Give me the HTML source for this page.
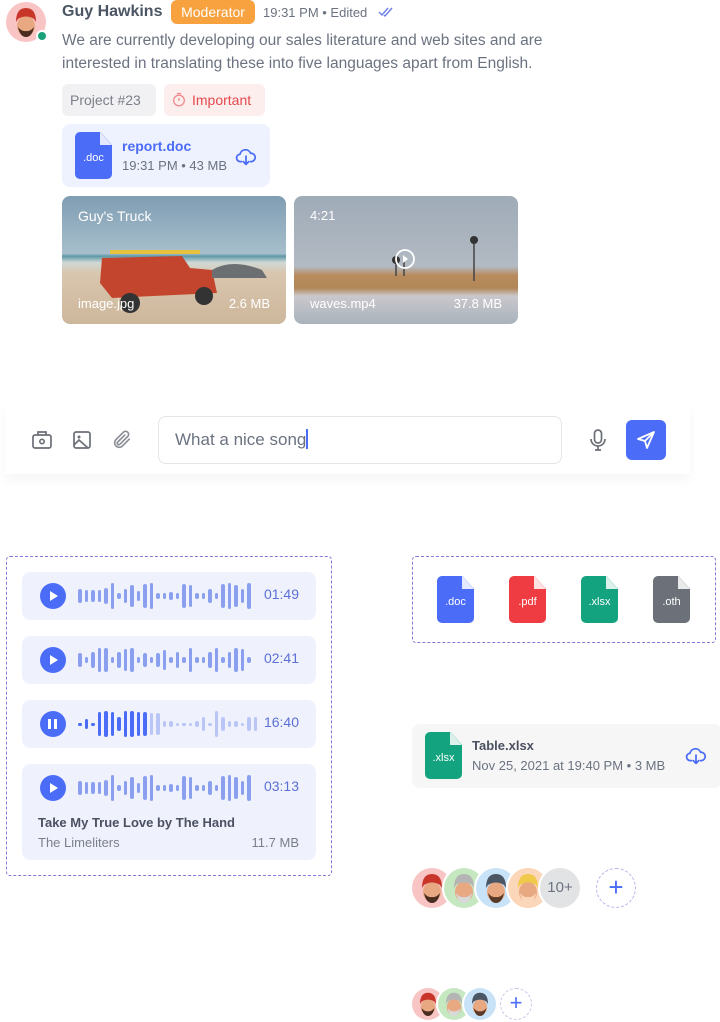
<!DOCTYPE html>
<html><head><meta charset="utf-8">
<style>
*{margin:0;padding:0;box-sizing:border-box}
body{width:720px;height:1022px;background:#fff;font-family:"Liberation Sans",sans-serif;position:relative;overflow:hidden;color:#6b7280}
.a{position:absolute}
.av{position:absolute;border-radius:50%;overflow:hidden}
.chip{position:absolute;height:32px;border-radius:6px;font-size:14px;line-height:32px;padding:0 8px}
.card{position:absolute;border-radius:8px}
.fi{position:absolute;width:37px;height:47px;border-radius:5px;color:#fff;font-size:11px;text-align:center;line-height:52px;clip-path:polygon(0 0,68% 0,100% 27%,100% 100%,0 100%)}
.fi:after{content:"";position:absolute;right:0;top:0;width:12px;height:13px;background:rgba(255,255,255,.85);clip-path:polygon(0 0,100% 100%,0 100%)}
.row{position:absolute;left:22px;width:294px;background:#eff2fd;border-radius:8px}
.play{position:absolute;left:18px;top:11px;width:26px;height:26px;border-radius:50%;background:#4a6cf7}
.play:after{content:"";position:absolute;left:10px;top:8px;border-left:8px solid #fff;border-top:5px solid transparent;border-bottom:5px solid transparent}
.pause:after{content:"";position:absolute;left:8px;top:8px;width:3px;height:10px;background:#fff;box-shadow:6px 0 0 #fff;border:0}
.wave{position:absolute;left:56px;top:10px;height:28px;display:flex;align-items:center;gap:3px}
.wave i{display:block;width:3.5px;border-radius:2px;background:#8aa0ee}
.tm{position:absolute;right:17px;top:14px;font-size:14px;color:#5b6fd6}
</style></head><body>

<div class="av" style="left:6px;top:2px;width:40px;height:40px;background:#f9c4c4">
<svg width="40" height="40" viewBox="0 0 40 40"><ellipse cx="20" cy="24" rx="9" ry="10" fill="#e8a882"/><path d="M10 20 Q10 6 20 6 Q30 6 30 20 L28 17 Q20 12 12 17Z" fill="#c8362a"/><path d="M12 25 Q14 35 20 35 Q26 35 28 25 Q24 30 20 29 Q16 30 12 25Z" fill="#4a2c20"/></svg></div>
<div class="a" style="left:36px;top:30px;width:12px;height:12px;border-radius:50%;background:#1aa179;border:2px solid #fff"></div>

<div class="a" style="left:62px;top:3px;font-size:16px;font-weight:bold;color:#4b5563">Guy Hawkins</div>
<div class="a" style="left:171px;top:0;width:84px;height:24px;border-radius:6px;background:#f7a23e;color:#fff;font-size:14px;line-height:24px;text-align:center">Moderator</div>
<div class="a" style="left:263px;top:5px;font-size:13px;color:#6b7280">19:31 PM • Edited</div>
<svg class="a" style="left:378px;top:6px" width="16" height="12" viewBox="0 0 16 12"><path d="M1 6l3 3 6-7M6 9l1 1 7-8" stroke="#6a7fe6" stroke-width="1.4" fill="none"/></svg>
<div class="a" style="left:62px;top:29px;font-size:15.5px;line-height:23px;color:#6b7280;width:525px">We are currently developing our sales literature and web sites and are interested in translating these into five languages apart from English.</div>

<div class="chip" style="left:62px;top:84px;width:94px;background:#f1f1f3;color:#7a7f89">Project #23</div>
<div class="chip" style="left:164px;top:84px;width:101px;background:#fdeeee;color:#e5484d;padding-left:28px">Important</div>
<svg class="a" style="left:172px;top:92px" width="14" height="15" viewBox="0 0 14 15"><circle cx="7" cy="8.5" r="5.3" stroke="#f08a8d" stroke-width="1.3" fill="none"/><path d="M7 6v3M5 1.5h4" stroke="#f08a8d" stroke-width="1.3"/></svg>

<div class="card" style="left:62px;top:124px;width:208px;height:63px;background:#eef2fe"></div>
<div class="fi" style="left:75px;top:132px;background:#4a6cf7">.doc</div>
<div class="a" style="left:122px;top:138px;font-size:14px;font-weight:bold;color:#4a6cf7">report.doc</div>
<div class="a" style="left:122px;top:158px;font-size:13px;color:#6b7280">19:31 PM • 43 MB</div>
<svg class="a" style="left:235px;top:146px" width="22" height="22" viewBox="0 0 24 24"><path d="M7 17H6a4 4 0 0 1-.5-8A6 6 0 0 1 17 8a4.5 4.5 0 0 1 1 9h-1M12 11v9M9 17l3 3 3-3" stroke="#4a6cf7" stroke-width="1.9" fill="none" stroke-linecap="round" stroke-linejoin="round"/></svg>

<div class="card" style="left:62px;top:196px;width:224px;height:128px;overflow:hidden;background:linear-gradient(#7f9db3 0%,#a7bfcc 45%,#5e98a8 47%,#cfd9d6 52%,#d9c6ae 60%,#cdb79c 100%)">
<svg class="a" style="left:0;top:0" width="224" height="128"><path d="M40 62 L120 60 L128 72 L150 74 L155 97 L50 102 L38 87Z" fill="#c4452e"/><path d="M48 58 h90 v-4 h-90z" fill="#e6c23e"/><circle cx="68" cy="107" r="10" fill="#333"/><circle cx="142" cy="100" r="9" fill="#333"/><path d="M150 74 Q170 62 200 74 L205 82 L150 82Z" fill="#6b6f72"/></svg>
<div class="a" style="left:16px;top:12px;color:#fff;font-size:14px">Guy's Truck</div>
<div class="a" style="left:16px;top:100px;color:#fff;font-size:13px">image.jpg</div>
<div class="a" style="right:16px;top:100px;color:#fff;font-size:13px">2.6 MB</div>
</div>
<div class="card" style="left:294px;top:196px;width:224px;height:128px;overflow:hidden;background:linear-gradient(#9fabb8 0%,#b2bac3 55%,#b98b5c 62%,#b18758 72%,#cac8cc 78%,#a9b2bc 100%)">
<svg class="a" style="left:0;top:0" width="224" height="128"><path d="M180 85V45M110 80V60M102 80V65" stroke="#444" stroke-width="1.5"/><circle cx="180" cy="44" r="4" fill="#333"/><circle cx="102" cy="64" r="4" fill="#333"/><circle cx="111" cy="63" r="9" fill="none" stroke="#fff" stroke-width="1.8"/><path d="M109 59v8l5-4z" fill="#fff"/></svg>
<div class="a" style="left:16px;top:12px;color:#fff;font-size:13px">4:21</div>
<div class="a" style="left:16px;top:100px;color:#fff;font-size:13px">waves.mp4</div>
<div class="a" style="right:16px;top:100px;color:#fff;font-size:13px">37.8 MB</div>
</div>

<div class="a" style="left:5px;top:404px;width:685px;height:70px;background:#fff;box-shadow:0 6px 10px rgba(0,0,0,.04)"></div>
<svg class="a" style="left:31px;top:430px" width="22" height="20" viewBox="0 0 22 20"><rect x="2" y="5" width="18" height="13" rx="2" stroke="#6b6f76" stroke-width="1.7" fill="none"/><path d="M7 5V2h8v3" stroke="#6b6f76" stroke-width="1.7" fill="none"/><circle cx="11" cy="11.5" r="2.2" stroke="#6b6f76" stroke-width="1.6" fill="none"/></svg>
<svg class="a" style="left:72px;top:430px" width="20" height="20" viewBox="0 0 20 20"><rect x="2" y="2" width="16" height="16" rx="2" stroke="#6b6f76" stroke-width="1.7" fill="none"/><circle cx="7" cy="7" r="1.5" fill="#6b6f76"/><path d="M2 15l5-5 9 8" stroke="#6b6f76" stroke-width="1.7" fill="none"/></svg>
<svg class="a" style="left:111px;top:429px" width="22" height="22" viewBox="0 0 24 24"><path d="M20 11l-8 8a5 5 0 0 1-7-7l8.5-8.5a3.3 3.3 0 0 1 4.7 4.7L9.7 16.7a1.7 1.7 0 0 1-2.4-2.4L15 6.6" stroke="#8a8e95" stroke-width="1.8" fill="none" stroke-linecap="round"/></svg>
<div class="a" style="left:158px;top:416px;width:404px;height:48px;border:1px solid #e3e5e8;border-radius:8px;padding-left:16px;font-size:17px;line-height:46px;color:#6b7280">What a nice song<span style="display:inline-block;width:2px;height:20px;background:#4a6cf7;vertical-align:-4px"></span></div>
<svg class="a" style="left:589px;top:429px" width="18" height="23" viewBox="0 0 18 23"><rect x="5.5" y="1" width="7" height="13" rx="3.5" stroke="#6b6f76" stroke-width="1.7" fill="none"/><path d="M2 10a7 7 0 0 0 14 0M9 17v4M6 21h6" stroke="#6b6f76" stroke-width="1.7" fill="none"/></svg>
<div class="a" style="left:626px;top:420px;width:40px;height:40px;border-radius:6px;background:#4a6cf7"></div>
<svg class="a" style="left:636px;top:430px" width="20" height="20" viewBox="0 0 20 20"><path d="M18 2L2 9l7 2 2 7z M9 11l9-9" stroke="#fff" stroke-width="1.8" fill="none" stroke-linejoin="round"/></svg>

<div class="a" style="left:6px;top:556px;width:326px;height:320px;border:1.3px dashed #8676d6;border-radius:4px"></div>
<div class="row" style="top:572px;height:48px"><div class="play"></div><div class="wave" id="w1"></div><div class="tm">01:49</div></div>
<div class="row" style="top:636px;height:48px"><div class="play"></div><div class="wave" id="w2"></div><div class="tm">02:41</div></div>
<div class="row" style="top:700px;height:48px"><div class="play pause"></div><div class="wave" id="w3"></div><div class="tm">16:40</div></div>
<div class="row" style="top:764px;height:96px"><div class="play"></div><div class="wave" id="w4"></div><div class="tm">03:13</div>
<div class="a" style="left:16px;top:51px;font-size:13px;font-weight:bold;color:#4b5060">Take My True Love by The Hand</div>
<div class="a" style="left:16px;top:71px;font-size:13px;color:#7a7f89">The Limeliters</div>
<div class="a" style="right:17px;top:71px;font-size:13px;color:#7a7f89">11.7 MB</div></div>

<div class="a" style="left:412px;top:556px;width:304px;height:87px;border:1.3px dashed #8676d6;border-radius:4px"></div>
<div class="fi" style="left:437px;top:576px;background:#4a6cf7">.doc</div>
<div class="fi" style="left:509px;top:576px;background:#ef3c42">.pdf</div>
<div class="fi" style="left:581px;top:576px;background:#14a37f">.xlsx</div>
<div class="fi" style="left:653px;top:576px;background:#6b7079">.oth</div>

<div class="card" style="left:412px;top:724px;width:310px;height:64px;background:#f6f6f7"></div>
<div class="fi" style="left:425px;top:732px;background:#14a37f">.xlsx</div>
<div class="a" style="left:472px;top:738px;font-size:13px;font-weight:bold;color:#4b5060">Table.xlsx</div>
<div class="a" style="left:472px;top:758px;font-size:13px;color:#6b7280">Nov 25, 2021 at 19:40 PM • 3 MB</div>
<svg class="a" style="left:685px;top:745px" width="22" height="22" viewBox="0 0 24 24"><path d="M7 17H6a4 4 0 0 1-.5-8A6 6 0 0 1 17 8a4.5 4.5 0 0 1 1 9h-1M12 11v9M9 17l3 3 3-3" stroke="#4a6cf7" stroke-width="1.9" fill="none" stroke-linecap="round" stroke-linejoin="round"/></svg>

<div id="avs"></div>
<div class="a" style="left:540px;top:868px;width:40px;height:40px;border-radius:50%;background:#e2e3e5;color:#6b7280;font-size:15px;line-height:40px;text-align:center;box-shadow:0 0 0 2px #fff">10+</div>
<div class="a" style="left:596px;top:868px;width:40px;height:40px;border-radius:50%;border:1.5px dashed #b9b4ea;color:#4a6cf7;font-size:26px;line-height:36px;text-align:center">+</div>
<div class="a" style="left:500px;top:988px;width:32px;height:32px;border-radius:50%;border:1.5px dashed #c9c4ee;color:#4a6cf7;font-size:22px;line-height:28px;text-align:center">+</div>

<script>
var p1=[14,12,12,12,16,26,6,14,22,10,24,26,6,6,8,6,24,22,6,6,14,6,24,26,22,14,26];
function mk(id,p,hl){var w=document.getElementById(id);p.forEach(function(h,i){var b=document.createElement('i');b.style.height=h+'px';if(hl!==undefined){b.style.background=i<hl?'#4a6cf7':'#b9c6f5'}w.appendChild(b)})}
mk('w1',p1);mk('w2',[14,6,16,24,24,6,16,22,24,6,14,6,14,20,6,16,6,24,6,6,16,24,6,16,24,22,6]);
mk('w3',[3,10,3,24,26,24,14,26,26,24,24,22,22,6,6,3,3,3,6,14,3,26,14,6,6,3,14,14],11);mk('w4',p1);
var cols=[['#f9c4c4','#c8362a','#4a2c20'],['#c6e8c0','#b5b5b5','#d9d9d9'],['#c8e2f7','#4b5563','#5a3a28'],['#fbd6b8','#f0c84a','#fbd6b8']];
function av(x,y,s,c){var d=document.createElement('div');d.className='av';d.style.cssText='left:'+x+'px;top:'+y+'px;width:'+s+'px;height:'+s+'px;background:'+c[0]+';box-shadow:0 0 0 2px #fff';d.innerHTML='<svg width="'+s+'" height="'+s+'" viewBox="0 0 40 40"><ellipse cx="20" cy="24" rx="9" ry="10" fill="#e8a882"/><path d="M10 20 Q10 6 20 6 Q30 6 30 20 L28 17 Q20 12 12 17Z" fill="'+c[1]+'"/><path d="M12 25 Q14 35 20 35 Q26 35 28 25 Q24 30 20 29 Q16 30 12 25Z" fill="'+c[2]+'"/></svg>';document.getElementById('avs').appendChild(d)}
for(var i=0;i<4;i++)av(412+i*32,868,40,cols[i]);
for(var i=0;i<3;i++)av(412+i*26,988,32,cols[i]);
</script>
</body></html>
